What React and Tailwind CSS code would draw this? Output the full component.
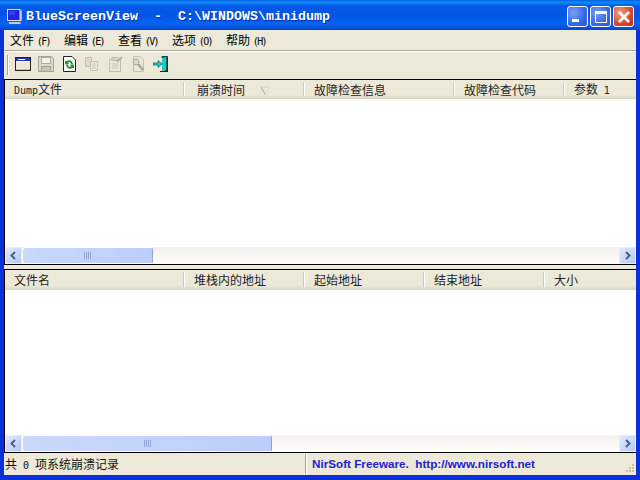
import React from 'react';

const cjk = '"Noto Sans CJK SC", "Liberation Sans", sans-serif';
const latin = "font-['DejaVu_Sans_Mono'] text-[10px]";

const columnsTop = [
  { w: 'w-[180px]', pad: 'pl-[9px]', label: <><span className={latin}>Dump</span>文件</> },
  { w: 'w-[120px]', pad: 'pl-[12px]', label: '崩溃时间', sort: true },
  { w: 'w-[150px]', pad: 'pl-[9px]', label: '故障检查信息' },
  { w: 'w-[110px]', pad: 'pl-[9px]', label: '故障检查代码' },
  { w: 'w-[71px]', pad: 'pl-[9px]', label: <>参数 <span className={`${latin} ml-[3px]`}>1</span></>, last: true },
];

const columnsBottom = [
  { w: 'w-[180px]', pad: 'pl-[9px]', label: '文件名' },
  { w: 'w-[120px]', pad: 'pl-[9px]', label: '堆栈内的地址' },
  { w: 'w-[120px]', pad: 'pl-[9px]', label: '起始地址' },
  { w: 'w-[120px]', pad: 'pl-[9px]', label: '结束地址' },
  { w: 'w-[91px]', pad: 'pl-[9px]', label: '大小', last: true },
];

const menus = [['文件', 'F'], ['编辑', 'E'], ['查看', 'V'], ['选项', 'O'], ['帮助', 'H']];

const Header = ({ columns, height }) => (
  <div className={`flex ${height} shrink-0 bg-[linear-gradient(#ece9d8_0,#ece9d8_80%,#e0ddcb_90%,#d5d2c0_100%)]`}>
    {columns.map((c, i) => (
      <div key={i} className={`${c.w} ${c.pad} relative flex items-center text-[12px] leading-none text-[#222] whitespace-pre`}>
        <span>{c.label}</span>
        {c.sort && (
          <svg className="absolute left-[75px] top-[6px]" width="11" height="10" viewBox="0 0 11 10">
            <path d="M1 1 H10" stroke="#d8d5c5" />
            <path d="M1 1 L5.5 9" stroke="#aca899" />
            <path d="M10 1 L5.5 9" stroke="#dedbca" />
          </svg>
        )}
        {!c.last && <div className="absolute right-0 top-[2px] bottom-[3px] w-[2px] border-l border-[#cfccbb] bg-white" />}
      </div>
    ))}
  </div>
);

const Arrow = ({ dir }) => (
  <div className="w-[17px] h-[17px] shrink-0 rounded-[2px] border border-[#e6eefc] bg-[linear-gradient(135deg,#e1eafe,#b4c8f6)] flex items-center justify-center">
    <svg width="9" height="9" viewBox="0 0 9 9">
      <path d={dir === 'left' ? 'M6 1 L2.5 4.5 L6 8' : 'M3 1 L6.5 4.5 L3 8'} fill="none" stroke="#4d6185" strokeWidth="2" />
    </svg>
  </div>
);

const Scrollbar = ({ thumb }) => (
  <div className="flex h-[17px] shrink-0 bg-[linear-gradient(#f3f1ec,#fefefb)]">
    <Arrow dir="left" />
    <div className="flex-1 min-w-0">
      <div className={`${thumb} h-[17px] rounded-[3px] border border-[#fff] border-r-[#8ea5d6] bg-[linear-gradient(90deg,#c9d8fc,#bccffa)] flex items-center justify-center`}>
        <div className="flex gap-[1px]">
          {[0, 1, 2, 3].map(i => <div key={i} className="w-[1px] h-[7px] bg-[#8fa6d8]" />)}
        </div>
      </div>
    </div>
    <Arrow dir="right" />
  </div>
);

const Btn = ({ children, red }) => (
  <div className={`w-[21px] h-[21px] rounded-[3px] border border-white flex items-center justify-center ${red ? 'bg-[radial-gradient(circle_at_30%_30%,#f0a080,#d9472b_60%,#b92f14)]' : 'bg-[radial-gradient(circle_at_30%_30%,#7c9ff4,#3468e8_60%,#2a58d8)]'}`}>
    {children}
  </div>
);

const Icon = ({ children }) => (
  <svg width="16" height="16" viewBox="0 0 16 16" className="shrink-0">{children}</svg>
);

export default function App() {
  return (
    <div className="w-[640px] h-[480px] flex flex-col overflow-hidden bg-[#0831d9]" style={{ fontFamily: cjk }}>
      {/* title bar */}
      <div className="h-[30px] shrink-0 flex items-center pt-[3px] pl-[6px] pr-[6px] bg-[linear-gradient(#0a5fe6_0,#0c8bf5_8%,#0658e8_20%,#0055e5_50%,#0663f2_80%,#0345d2_100%)]">
        <svg width="17" height="17" viewBox="0 0 17 17" className="shrink-0">
          <path d="M14 3 L16 2 V12 L14 14 Z" fill="#aab4d0" />
          <path d="M3 14 H14 L15 16 H3 Z" fill="#c4cbe0" />
          <rect x="1.5" y="1.5" width="12.5" height="11" fill="#2222e0" stroke="#dde2f0" />
          <rect x="3" y="3" width="6" height="4" fill="#3a3af0" />
        </svg>
        <span className="ml-[3px] font-['Liberation_Mono'] font-bold text-[13.33px] text-white whitespace-pre [text-shadow:1px_1px_0_#0a2fa0]">BlueScreenView  -  C:\WINDOWS\minidump</span>
        <div className="ml-auto flex gap-[2px]">
          <Btn>
            <div className="w-[7px] h-[3px] bg-white mt-[8px] -ml-[5px]" />
          </Btn>
          <Btn>
            <div className="w-[12px] h-[12px] border border-white border-t-[3px]" />
          </Btn>
          <Btn red>
            <svg width="14" height="14" viewBox="0 0 14 14"><path d="M2 2 L12 12 M12 2 L2 12" stroke="#fff" strokeWidth="2.6" /></svg>
          </Btn>
        </div>
      </div>

      {/* client area */}
      <div className="flex-1 min-h-0 mx-[4px] flex flex-col bg-[#ece9d8]">
        {/* menu */}
        <div className="h-[20px] shrink-0 flex items-center pl-[6px]">
          {menus.map(([name, key]) => (
            <div key={key} className="w-[54px] text-[12px] text-black whitespace-pre">
              {name} <span className="font-['DejaVu_Sans_Mono'] text-[10px] tracking-[-1.6px]">({key})</span>
            </div>
          ))}
        </div>
        <div className="h-[2px] shrink-0 border-t border-[#aca899] bg-white" />

        {/* toolbar */}
        <div className="h-[27px] shrink-0 flex items-start pt-[3px] pl-[3px]">
          <div className="w-[2px] h-[20px] border-l border-[#aca899] bg-white mr-[6px]" />
          <div className="flex gap-[7px] pt-[1px]">
            <Icon>
              <rect x="0.5" y="1.5" width="15" height="13" fill="#ece9d8" stroke="#222" />
              <rect x="1" y="2" width="14" height="3" fill="#2a3aa8" />
              <path d="M3 3.5 h7" stroke="#fff" />
              <rect x="1" y="5" width="14" height="1" fill="#fff" />
              <rect x="1" y="13" width="14" height="1" fill="#c8c4b0" />
            </Icon>
            <Icon>
              <path d="M0.5 0.5 H13.5 L15.5 2.5 V15.5 H0.5 Z" fill="#dcd9c8" stroke="#a5a294" />
              <rect x="3.5" y="1.5" width="9" height="6" fill="#f4f2e8" stroke="#b0ad9e" />
              <rect x="3.5" y="10.5" width="9" height="5" fill="#c8c5b5" stroke="#a5a294" />
            </Icon>
            <Icon>
              <path d="M2.5 0.5 H11 L14.5 4 V15.5 H2.5 Z" fill="#fff" stroke="#222" />
              <path d="M11 8 A3 3 0 0 0 6 6 M5 5 V7.5 H7.5" fill="none" stroke="#1c8c2c" strokeWidth="1.8" />
              <path d="M6 9 A3 3 0 0 0 11 11 M12 12 V9.5 H9.5" fill="none" stroke="#1c8c2c" strokeWidth="1.8" />
            </Icon>
            <Icon>
              <path d="M1.5 1.5 H7.5 V10.5 H1.5 Z" fill="#dedbca" stroke="#c4c1b1" />
              <path d="M6.5 5.5 H13.5 V14.5 H6.5 Z" fill="#ece9da" stroke="#c4c1b1" />
              <path d="M8 8 H12 M8 10 H12 M8 12 H12" stroke="#cfccbc" />
            </Icon>
            <Icon>
              <rect x="2.5" y="3.5" width="11" height="12" fill="#ece9da" stroke="#c0bdad" />
              <rect x="5" y="1.5" width="6" height="3" fill="#d8d5c5" stroke="#c0bdad" />
              <path d="M5 8 H11 M5 10 H11 M5 12 H11" stroke="#c8c5b5" />
              <path d="M10 6 L15 1" stroke="#b8b5a6" strokeWidth="2" />
            </Icon>
            <Icon>
              <path d="M3.5 0.5 H10 L13.5 4 V15.5 H3.5 Z" fill="#ece9da" stroke="#c4c1b1" />
              <circle cx="6" cy="6" r="3" fill="#dcd9c8" stroke="#aaa798" />
              <path d="M8 8 L13 14" stroke="#aaa798" strokeWidth="2.4" />
            </Icon>
            <Icon>
              <path d="M9 0.5 H14.5 V15 H12 V2 H9 Z" fill="#0f6a62" stroke="#0b3d3a" />
              <path d="M9 2 L13 1 V14 L9 15 Z" fill="#21c8c0" />
              <path d="M0 7 H5 V4.5 L9 8 L5 11.5 V9 H0 Z" fill="#11d6d6" stroke="#083c3c" strokeWidth="0.6" />
              <path d="M7 15.5 H15" stroke="#222" />
            </Icon>
          </div>
        </div>

        {/* top list */}
        <div className="h-[185px] shrink-0 border border-black border-r-0 border-b-0 flex flex-col bg-white">
          <Header columns={columnsTop} height="h-[19px]" />
          <div className="flex-1 min-h-0" />
          <Scrollbar thumb="w-[131px]" />
        </div>

        {/* splitter */}
        <div className="h-[6px] shrink-0 border-t border-b border-black bg-[#ece9d8]" />

        {/* bottom list */}
        <div className="flex-1 min-h-0 flex flex-col bg-white border-l border-black">
          <Header columns={columnsBottom} height="h-[20px]" />
          <div className="flex-1 min-h-0" />
          <Scrollbar thumb="w-[250px]" />
        </div>

        {/* status bar */}
        <div className="h-[23px] shrink-0 border-t border-black flex items-center relative">
          <div className="w-[301px] pl-[1px] text-[12px] text-[#111] whitespace-pre">
            共<span className={`${latin} mx-[6px]`}>0</span>项系统崩溃记录
          </div>
          <div className="w-[2px] h-[20px] border-l border-[#aca899] bg-white" />
          <div className="pl-[5px] font-['Liberation_Sans'] font-bold text-[11.7px] text-[#2222d0] whitespace-pre">
            NirSoft Freeware.  http://www.nirsoft.net
          </div>
          <svg className="absolute right-0 bottom-0" width="12" height="12" viewBox="0 0 12 12">
            <path d="M8 1h2v2H8z M5 4h2v2H5z M8 4h2v2H8z M2 7h2v2H2z M5 7h2v2H5z M8 7h2v2H8z" fill="#d8b8a0" />
          </svg>
        </div>
      </div>
      <div className="h-[5px] shrink-0" />
    </div>
  );
}
